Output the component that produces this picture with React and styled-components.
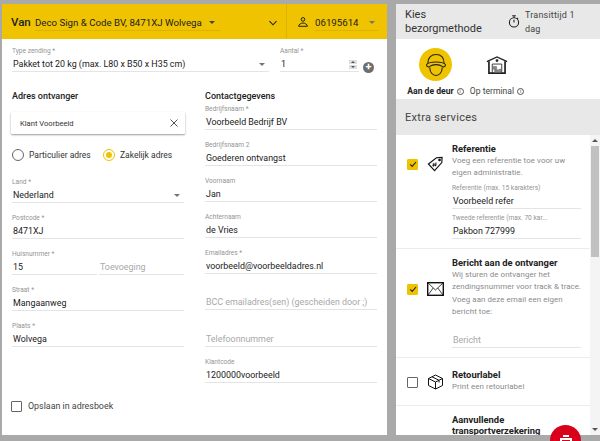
import React from 'react'
import styled, { createGlobalStyle } from 'styled-components'

const Global = createGlobalStyle`
  html, body { margin: 0; padding: 0; height: 441px; overflow: hidden; background: #a9a9a9; }
  body { font-family: Roboto, "Liberation Sans", sans-serif; color: #212121; }
  * { box-sizing: border-box; }
`

const Page = styled.div`
  display: flex;
  height: 441px;
  width: 600px;
  padding: 4px 0 6px 2px;
  gap: 9px;
  overflow: hidden;
`

const LeftPanel = styled.section`
  width: 385px;
  background: #fff;
  display: flex;
  flex-direction: column;
`

const TopBar = styled.header`
  height: 35px;
  background: #f0c300;
  display: flex;
  align-items: center;
  flex: none;
`

const FromPart = styled.div`
  width: 285px;
  height: 100%;
  display: flex;
  align-items: center;
  padding-left: 9px;
  border-right: 1px solid #dcb300;
`

const FromLabel = styled.strong`
  font-size: 11.5px;
  font-weight: 500;
  width: 24px;
  flex: none;
`

const BarSelect = styled.div`
  display: flex;
  align-items: center;
  justify-content: space-between;
  font-size: 9.7px;
  height: 17px;
  margin-top: 2px;
  border-bottom: 1px solid #dcb300;
  white-space: nowrap;
  width: ${p => p.$w}px;
`

const Caret = styled.span`
  width: 0;
  height: 0;
  flex: none;
  border-left: 3px solid transparent;
  border-right: 3px solid transparent;
  border-top: 3px solid ${p => p.$light ? '#757575' : '#444'};
  margin-right: ${p => p.$mr || 4}px;
`

const Chevron = styled.svg`
  width: 10px;
  height: 10px;
  margin-left: 48px;
  margin-top: 2px;
`

const PhonePart = styled.div`
  flex: 1;
  height: 100%;
  display: flex;
  align-items: center;
  padding-left: 11px;
  gap: 7px;
`

const SendRow = styled.div`
  display: flex;
  align-items: flex-start;
  height: 33px;
  padding: 7px 0 0 10px;
  flex: none;
`

const Columns = styled.div`
  display: grid;
  grid-template-columns: 172px 172px;
  column-gap: 21px;
  padding: 18px 0 0 10px;
`

const Col = styled.div`
  display: flex;
  flex-direction: column;
`

const Heading = styled.h3`
  font-size: 9px;
  font-weight: 500;
  line-height: 13px;
  margin: 0;
  color: #212121;
`

const FieldBox = styled.div`
  width: ${p => p.$w ? `${p.$w}px` : '100%'};
  height: ${p => p.$h || 36}px;
  padding-top: ${p => p.$pt ?? 10}px;
  margin-left: ${p => p.$ml || 0}px;
  flex: none;
`

const FieldLabel = styled.label`
  display: block;
  font-size: 6.6px;
  line-height: 10px;
  height: ${p => p.$h || 10}px;
  color: #949494;
  white-space: nowrap;
`

const FieldValue = styled.div`
  display: flex;
  align-items: center;
  justify-content: space-between;
  height: 16px;
  padding: 2px 0 0 1px;
  border-bottom: 1px solid #e4e4e4;
  font-size: 8.9px;
  line-height: 13px;
  color: ${p => p.$placeholder ? '#a8a8a8' : '#212121'};
  white-space: nowrap;
`

const Field = ({ label, value, placeholder, w, h, children }) => (
  <FieldBox $w={w} $h={h}>
    <FieldLabel>{label || '\u00a0'}</FieldLabel>
    <FieldValue $placeholder={placeholder}>
      <span>{value || placeholder}</span>
      {children}
    </FieldValue>
  </FieldBox>
)

const Spinner = styled.span`
  display: flex;
  flex-direction: column;
  gap: 1px;
  width: 8px;
  margin-right: 2px;
  i { display: block; height: 4px; background: #dedede; position: relative; }
  i::after {
    content: "";
    position: absolute;
    left: 1.5px;
    width: 0;
    height: 0;
    border-left: 2.5px solid transparent;
    border-right: 2.5px solid transparent;
  }
  i:first-child::after { top: 1px; border-bottom: 2px solid #555; }
  i:last-child::after { top: 1px; border-top: 2px solid #555; }
`

const PlusDot = styled.span`
  width: 11px;
  height: 11px;
  border-radius: 50%;
  background: #6d6d6d;
  color: #fff;
  font-size: 11px;
  font-weight: 700;
  line-height: 10px;
  text-align: center;
  margin: 16px 0 0 4px;
  flex: none;
`

const SearchBox = styled.div`
  width: 174px;
  height: 22px;
  margin: 9px 0 0 -1px;
  background: #fff;
  box-shadow: 0 1px 2px rgba(0,0,0,.4);
  border-radius: 1px;
  display: flex;
  align-items: center;
  justify-content: space-between;
  padding: 0 7px 0 9px;
  font-size: 7.6px;
  color: #333;
  flex: none;
`

const RadioRow = styled.div`
  display: flex;
  align-items: center;
  height: 12px;
  margin: 15px 0 6px 0;
  font-size: 8.5px;
  color: #333;
  white-space: nowrap;
  flex: none;
`

const RadioDot = styled.span`
  width: 12px;
  height: 12px;
  border-radius: 50%;
  flex: none;
  border: 1px solid ${p => p.$on ? '#f0c300' : '#666'};
  display: flex;
  align-items: center;
  justify-content: center;
  margin-right: 5px;
  &::after {
    content: "";
    width: 6px;
    height: 6px;
    border-radius: 50%;
    background: ${p => p.$on ? '#f0c300' : 'transparent'};
  }
`

const RadioText = styled.span`
  width: ${p => p.$w}px;
  flex: none;
`

const TwoFields = styled.div`
  display: grid;
  grid-template-columns: 85px 85px;
  column-gap: 2px;
`

const SaveRow = styled.label`
  display: flex;
  align-items: center;
  gap: 6px;
  font-size: 8.9px;
  line-height: 11px;
  color: #444;
  margin: 54px 0 0 -1px;
`

const CheckBox = styled.span`
  width: 11px;
  height: 11px;
  flex: none;
  border: 1px solid ${p => p.$on ? '#f0c300' : '#666'};
  border-radius: 1px;
  background: ${p => p.$on ? '#f0c300' : '#fff'};
  display: flex;
  align-items: center;
  justify-content: center;
`

const RightPanel = styled.aside`
  flex: 1;
  background: #fff;
  display: flex;
  flex-direction: column;
  position: relative;
`

const MethodHead = styled.div`
  height: 35px;
  background: #e8e8e8;
  display: flex;
  align-items: center;
  padding-left: 9px;
  flex: none;
`

const MethodTitle = styled.div`
  width: 103px;
  padding-right: 20px;
  font-size: 11px;
  line-height: 13.5px;
  color: #333;
`

const Transit = styled.div`
  display: flex;
  align-items: center;
  gap: 5px;
  font-size: 9px;
  line-height: 14px;
  letter-spacing: .2px;
  color: #444;
  width: 80px;
`

const Methods = styled.div`
  height: 60px;
  display: flex;
  flex: none;
  padding: 9px 0 0 10px;
  gap: 2px;
`

const Method = styled.div`
  display: flex;
  flex-direction: column;
  align-items: center;
  width: ${p => p.$w}px;
  font-size: 8.6px;
  font-weight: ${p => p.$on ? 700 : 400};
  color: ${p => p.$on ? '#222' : '#444'};
  white-space: nowrap;
`

const MethodIcon = styled.div`
  width: 33px;
  height: 33px;
  border-radius: 50%;
  background: ${p => p.$on ? '#f0c300' : 'transparent'};
  display: flex;
  align-items: center;
  justify-content: center;
`

const MethodLabel = styled.div`
  display: flex;
  align-items: center;
  gap: 3px;
  margin-top: 4px;
  line-height: 12px;
`

const Info = styled.span`
  width: 7px;
  height: 7px;
  border-radius: 50%;
  border: 1px solid #555;
  font-size: 5px;
  line-height: 5px;
  font-weight: 400;
  text-align: center;
  color: #444;
  margin-top: 1px;
`

const ExtraHead = styled.div`
  height: 36px;
  background: #e8e8e8;
  flex: none;
  font-size: 11px;
  letter-spacing: .3px;
  color: #444;
  padding: 12px 0 0 9px;
  line-height: 14px;
`

const ScrollArea = styled.div`
  flex: 1;
  position: relative;
  overflow: hidden;
  padding-right: 10px;
`

const Track = styled.div`
  position: absolute;
  right: 0;
  top: 0;
  bottom: 0;
  width: 10px;
  background: #f4f4f4;
  &::before {
    content: "";
    position: absolute;
    top: 11px;
    left: 1px;
    right: 1px;
    height: 111px;
    background: #c1c1c1;
  }
  &::after {
    content: "";
    position: absolute;
    top: 4px;
    left: 2px;
    border-left: 3px solid transparent;
    border-right: 3px solid transparent;
    border-bottom: 3px solid #555;
  }
`

const TrackDown = styled.span`
  position: absolute;
  right: 2px;
  bottom: 4px;
  border-left: 3px solid transparent;
  border-right: 3px solid transparent;
  border-top: 3px solid #555;
`

const Service = styled.div`
  display: flex;
  align-items: flex-start;
  border-bottom: ${p => p.$last ? 0 : '1px solid #ececec'};
  padding: ${p => p.$pt}px 0 0 ${p => p.$pl || 11}px;
  height: ${p => p.$h}px;
`

const ServiceLeft = styled.div`
  width: 45px;
  flex: none;
  display: flex;
  align-items: center;
  gap: 9px;
  margin-top: ${p => p.$mt || 0}px;
`

const ServiceBody = styled.div`
  width: 129px;
  flex: none;
`

const ServiceTitle = styled.div`
  font-size: 9.4px;
  font-weight: 700;
  line-height: ${p => p.$lh || 12}px;
  color: #222;
  white-space: nowrap;
`

const ServiceText = styled.div`
  font-size: 7.9px;
  line-height: 12.4px;
  letter-spacing: .08px;
  color: #8a8a8a;
  white-space: nowrap;
`

const Fab = styled.div`
  position: absolute;
  right: 19px;
  bottom: -21px;
  width: 31px;
  height: 31px;
  border-radius: 50%;
  background: #d9001b;
  display: flex;
  align-items: flex-start;
  justify-content: center;
  padding-top: 10px;
`

const Tick = () => (
  <svg width="8" height="8" viewBox="0 0 10 10" fill="none" stroke="#222" strokeWidth="1.4">
    <path d="M1.5 5.500 L4 8 L8.800 2.500" />
  </svg>
)

const App = () => (
  <>
    <Global />
    <Page>
      <LeftPanel>
        <TopBar>
          <FromPart>
            <FromLabel>Van</FromLabel>
            <BarSelect $w={185}>
              <span>Deco Sign &amp; Code BV, 8471XJ Wolvega</span>
              <Caret $mr={5} />
            </BarSelect>
            <Chevron viewBox="0 0 10 10" fill="none" stroke="#222" strokeWidth="1.1">
              <path d="M1.500 3.200 L5 6.800 L8.500 3.200" />
            </Chevron>
          </FromPart>
          <PhonePart>
            <svg width="10" height="10" viewBox="0 0 10 10" fill="none" stroke="#222" strokeWidth="1">
              <circle cx="5" cy="2.400" r="1.800" />
              <path d="M.6 9.300 C.6 7.500 3 6 5 6 C7 6 9.400 7.500 9.400 9.300 Z" />
            </svg>
            <BarSelect $w={63}>
              <span>06195614</span>
              <Caret $mr={3} $light />
            </BarSelect>
          </PhonePart>
        </TopBar>

        <SendRow>
          <FieldBox $w={257} $pt={0} $h={26}>
            <FieldLabel>Type zending *</FieldLabel>
            <FieldValue>
              <span>Pakket tot 20 kg (max. L80 x B50 x H35 cm)</span>
              <Caret $light />
            </FieldValue>
          </FieldBox>
          <FieldBox $w={79} $pt={0} $h={26} $ml={11}>
            <FieldLabel>Aantal *</FieldLabel>
            <FieldValue>
              <span>1</span>
              <Spinner><i /><i /></Spinner>
            </FieldValue>
          </FieldBox>
          <PlusDot>+</PlusDot>
        </SendRow>

        <Columns>
          <Col>
            <Heading>Adres ontvanger</Heading>
            <SearchBox>
              <span>Klant Voorbeeld</span>
              <svg width="8" height="8" viewBox="0 0 8 8" stroke="#555" strokeWidth="1">
                <path d="M.5 .5 L7.500 7.500 M7.500 .5 L.5 7.500" />
              </svg>
            </SearchBox>
            <RadioRow>
              <RadioDot />
              <RadioText $w={74}>Particulier adres</RadioText>
              <RadioDot $on />
              <RadioText $w={60}>Zakelijk adres</RadioText>
            </RadioRow>
            <Field label="Land *" value="Nederland"><Caret $light /></Field>
            <Field label="Postcode *" value="8471XJ" />
            <TwoFields>
              <Field label="Huisnummer *" value="15" />
              <Field placeholder="Toevoeging" />
            </TwoFields>
            <Field label="Straat *" value="Mangaanweg" />
            <Field label="Plaats *" value="Wolvega" />
            <SaveRow>
              <CheckBox />
              <span>Opslaan in adresboek</span>
            </SaveRow>
          </Col>
          <Col>
            <Heading>Contactgegevens</Heading>
            <FieldBox $pt={1} $h={27}>
              <FieldLabel>Bedrijfsnaam *</FieldLabel>
              <FieldValue><span>Voorbeeld Bedrijf BV</span></FieldValue>
            </FieldBox>
            <Field label="Bedrijfsnaam 2" value="Goederen ontvangst" />
            <Field label="Voornaam" value="Jan" />
            <Field label="Achternaam" value="de Vries" />
            <Field label="Emailadres *" value="voorbeeld@voorbeeldadres.nl" />
            <Field placeholder="BCC emailadres(sen) (gescheiden door ;)" h={37} />
            <Field placeholder="Telefoonnummer" />
            <Field label="Klantcode" value="1200000voorbeeld" />
          </Col>
        </Columns>
      </LeftPanel>

      <RightPanel>
        <MethodHead>
          <MethodTitle>Kies bezorgmethode</MethodTitle>
          <Transit>
            <svg width="12" height="13" viewBox="0 0 12 13" fill="none" stroke="#222" strokeWidth="1.1" style={{ flex: 'none' }}>
              <circle cx="6" cy="7.400" r="4.600" />
              <path d="M4.200 .8 H7.800 M6 .8 V2.800 M6 7.400 V4.800 M10 3 L9 4" />
            </svg>
            <span>Transittijd 1 dag</span>
          </Transit>
        </MethodHead>

        <Methods>
          <Method $w={59} $on>
            <MethodIcon $on>
              <svg width="22" height="24" viewBox="0 0 23 25" fill="none" stroke="#222" strokeWidth="1.100">
                <path d="M3 11 C3 4 7 1.500 11.500 1.500 C16 1.500 20 4 20 11" />
                <path d="M1.500 12 C5 8.500 18 8.500 21.500 12" />
                <path d="M1.500 12 C1.500 14.500 4 15 5 14 C8 11.500 15 11.500 18 14 C19 15 21.500 14.500 21.500 12" />
                <path d="M5 15 C5 20 8 23.500 11.500 23.500 C15 23.500 18 20 18 15" />
              </svg>
            </MethodIcon>
            <MethodLabel>Aan de deur <Info>i</Info></MethodLabel>
          </Method>
          <Method $w={60}>
            <MethodIcon>
              <svg width="22" height="18" viewBox="0 0 23 19" fill="none" stroke="#222" strokeWidth="1.400">
                <path d="M.8 6 L11.500 1 L22.200 6" />
                <path d="M3 5.500 V18 H20 V5.500" strokeWidth="1.800" />
                <circle cx="11.500" cy="4.800" r=".8" fill="#222" />
                <path d="M6.500 8.500 H16.500 V18 M6.500 8.500 V18" strokeWidth=".9" />
                <path d="M7.500 11 H11 V14 H7.500 Z M9 14.500 H13 V17.500 H9 Z M13.500 14 H16 V17.500 H13.500" fill="#888" stroke="#555" strokeWidth=".5" />
              </svg>
            </MethodIcon>
            <MethodLabel>Op terminal <Info>i</Info></MethodLabel>
          </Method>
        </Methods>

        <ExtraHead>Extra services</ExtraHead>

        <ScrollArea>
          <Service $h={114} $pt={8}>
            <ServiceLeft $mt={13}>
              <CheckBox $on><Tick /></CheckBox>
              <svg width="17" height="16" viewBox="0 0 17 17" fill="none" stroke="#111" strokeWidth="1.200">
                <path d="M1 8.500 L9.500 1.800 L15.500 1.500 L15.200 7 L7.500 15.500 Z" />
                <circle cx="12.800" cy="4.200" r=".8" fill="#111" />
                <path d="M6.800 7.300 L6.200 11.500 M9 6.800 L8.400 11 M5.400 8.700 H9.800 M5 10 H9.500" strokeWidth=".8" />
              </svg>
            </ServiceLeft>
            <ServiceBody>
              <ServiceTitle>Referentie</ServiceTitle>
              <ServiceText>Voeg een referentie toe voor uw</ServiceText>
              <ServiceText>eigen administratie.</ServiceText>
              <FieldBox $pt={3} $h={29}>
                <FieldLabel>Referentie (max. 15 karakters)</FieldLabel>
                <FieldValue><span>Voorbeeld refer</span></FieldValue>
              </FieldBox>
              <FieldBox $pt={4} $h={30}>
                <FieldLabel>Tweede referentie (max. 70 kar...</FieldLabel>
                <FieldValue><span>Pakbon 727999</span></FieldValue>
              </FieldBox>
            </ServiceBody>
          </Service>

          <Service $h={109} $pt={8}>
            <ServiceLeft $mt={25}>
              <CheckBox $on><Tick /></CheckBox>
              <svg width="17" height="14" viewBox="0 0 17 14" fill="none" stroke="#111" style={{ flex: 'none' }}>
                <rect x=".7" y=".7" width="15.600" height="12.600" strokeWidth="1.400" />
                <path d="M1 1 L8.500 8 L16 1 M1 13 L6.200 6 M16 13 L10.800 6" strokeWidth=".8" />
              </svg>
            </ServiceLeft>
            <ServiceBody>
              <ServiceTitle>Bericht aan de ontvanger</ServiceTitle>
              <ServiceText>Wij sturen de ontvanger het</ServiceText>
              <ServiceText>zendingsnummer voor track &amp; trace.</ServiceText>
              <ServiceText>Voeg aan deze email een eigen</ServiceText>
              <ServiceText>bericht toe:</ServiceText>
              <FieldBox $pt={0} $h={29}>
                <FieldLabel $h={13}>&nbsp;</FieldLabel>
                <FieldValue $placeholder><span>Bericht</span></FieldValue>
              </FieldBox>
            </ServiceBody>
          </Service>

          <Service $h={48} $pt={11}>
            <ServiceLeft $mt={5}>
              <CheckBox />
              <svg width="17" height="16" viewBox="0 0 17 16" fill="none" stroke="#111" strokeWidth="1">
                <path d="M8.500 1 L15.500 4.500 V11.500 L8.500 15 L1.500 11.500 V4.500 Z" />
                <path d="M1.500 4.500 L8.500 8 L15.500 4.500 M8.500 8 V15 M5 2.800 L12 6.300 V8.500" />
              </svg>
            </ServiceLeft>
            <ServiceBody>
              <ServiceTitle>Retourlabel</ServiceTitle>
              <ServiceText>Print een retourlabel</ServiceText>
            </ServiceBody>
          </Service>

          <Service $h={40} $pt={8} $pl={56} $last>
            <ServiceBody>
              <ServiceTitle $lh={11}>Aanvullende</ServiceTitle>
              <ServiceTitle $lh={11}>transportverzekering</ServiceTitle>
            </ServiceBody>
          </Service>
          <Track><TrackDown /></Track>
        </ScrollArea>

        <Fab>
          <svg width="12" height="9" viewBox="0 0 12 9" fill="#fff">
            <path d="M3 0 H9 V2 H3 Z M0 3 H12 V7 H10 V5 H2 V7 H0 Z M3 6 H9 V9 H3 Z" />
          </svg>
        </Fab>
      </RightPanel>
    </Page>
  </>
)

export default App
